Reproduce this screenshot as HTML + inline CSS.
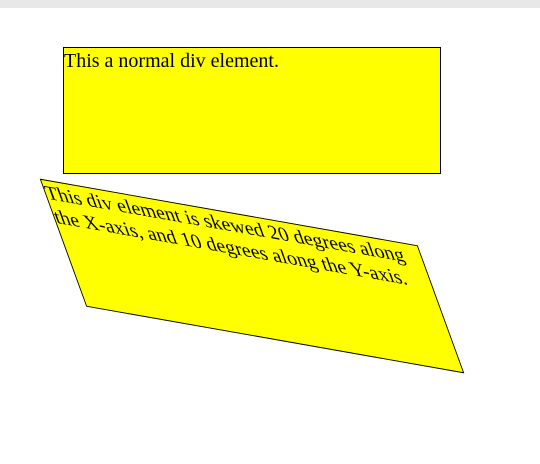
<!DOCTYPE html>
<html><head><style>
html,body{margin:0;padding:0;background:#fff;width:540px;height:464px;overflow:hidden}
.bar{position:absolute;left:0;top:0;width:540px;height:8px;background:#e8e8e8}
.box{position:absolute;left:63px;width:376px;height:125px;background:#ff0;border:1px solid #000;font-family:"Liberation Serif",serif;font-size:20px;line-height:24px;padding-top:1px;box-sizing:content-box;color:#000}
#a{top:47px;height:124px}
#b{top:212px;height:125px;transform:skew(20deg,10deg)}
</style></head><body>
<div class="bar"></div>
<div class="box" id="a">This a normal div element.</div>
<div class="box" id="b">This div element is skewed 20 degrees along the X-axis, and 10 degrees along the Y-axis.</div>
</body></html>
